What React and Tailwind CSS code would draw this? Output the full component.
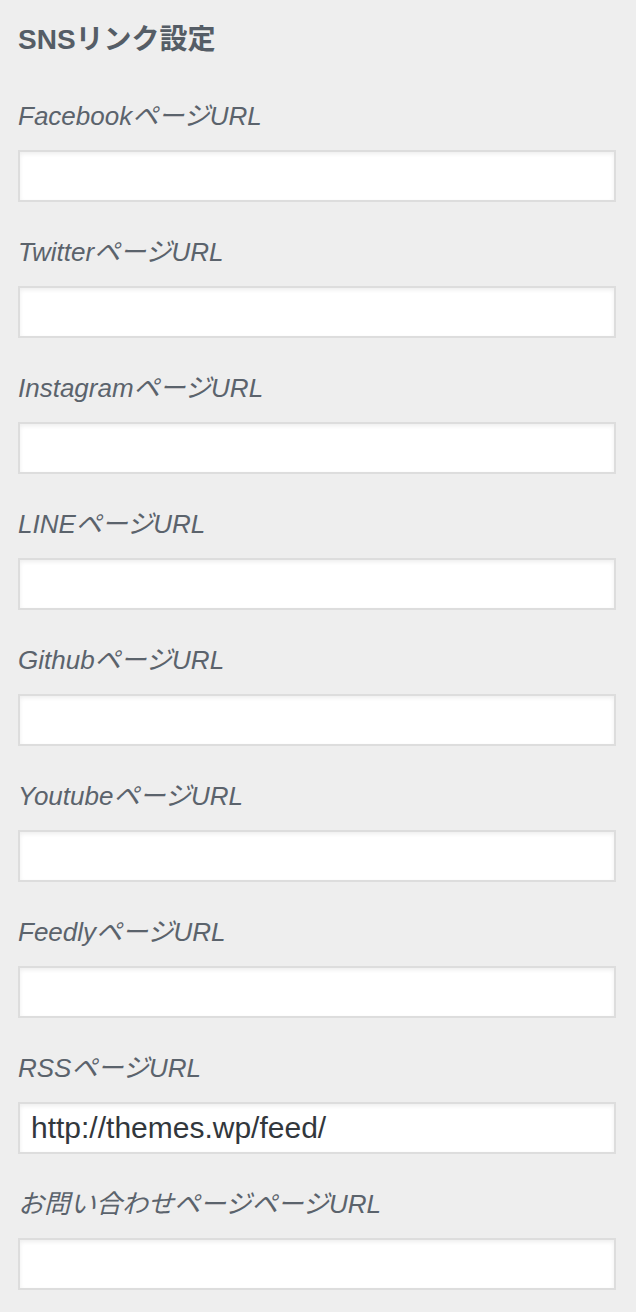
import { useState } from 'react'

const fields = [
	{ key: 'facebook', label: 'FacebookページURL', value: '' },
	{ key: 'twitter', label: 'TwitterページURL', value: '' },
	{ key: 'instagram', label: 'InstagramページURL', value: '' },
	{ key: 'line', label: 'LINEページURL', value: '' },
	{ key: 'github', label: 'GithubページURL', value: '' },
	{ key: 'youtube', label: 'YoutubeページURL', value: '' },
	{ key: 'feedly', label: 'FeedlyページURL', value: '' },
	{ key: 'rss', label: 'RSSページURL', value: 'http://themes.wp/feed/' },
	{ key: 'contact', label: 'お問い合わせページページURL', value: '' }
]

export default function App() {
	const [values, setValues] = useState(() =>
		Object.fromEntries(fields.map((f) => [f.key, f.value]))
	)

	const onChange = (key) => (e) => setValues({ ...values, [key]: e.target.value })

	return (
		<div className="min-h-[1312px] w-full bg-[#eeeeee] pl-[18px] pr-[20px] pt-[22px] font-['Liberation_Sans','Noto_Sans_CJK_JP',sans-serif]">
			<h3 className="text-[28px] leading-[36px] font-bold text-[#555d66] mb-[40px]">SNSリンク設定</h3>
			{fields.map((f) => (
				<div key={f.key} className="mb-[32px]">
					<label htmlFor={f.key} className="block text-[26px] leading-[36px] italic text-[#5b636c] mb-[16px]">
						{f.label}
					</label>
					<input
						id={f.key}
						type="text"
						value={values[f.key]}
						onChange={onChange(f.key)}
						className="block w-full h-[52px] bg-white border-2 border-[#dddddd] shadow-[inset_0_2px_4px_rgba(0,0,0,0.07)] px-[11px] text-[30px] text-[#32373c] outline-none"
					/>
				</div>
			))}
		</div>
	)
}
